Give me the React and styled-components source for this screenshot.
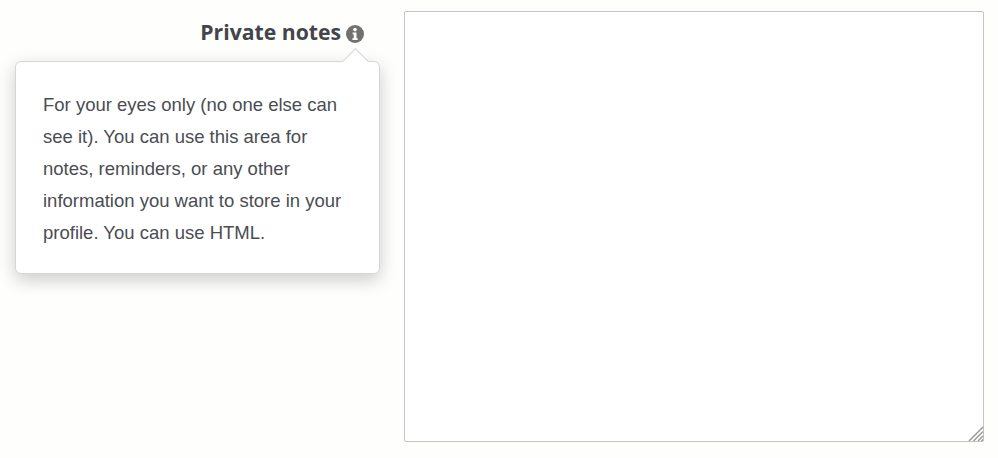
import React from 'react';
import styled, { createGlobalStyle } from 'styled-components';

const GlobalStyle = createGlobalStyle`
    html, body {
        margin: 0;
        padding: 0;
        background: #fefefd;
    }
`;

const StyledForm = styled.div`
    display: grid;
    grid-template-columns: 404px 580px;
    width: 998px;
    height: 458px;
    padding-top: 11px;
    box-sizing: border-box;
    overflow: hidden;
`;

const StyledLabelCol = styled.div`
    position: relative;
    display: flex;
    justify-content: flex-end;
    align-items: flex-start;
    padding: 7px 40px 0 0;
`;

const StyledLabel = styled.label`
    display: flex;
    align-items: center;
    gap: 5px;
    color: #43454b;
    font-family: 'Open Sans', sans-serif;
    font-size: 21.2px;
    font-weight: 700;
    line-height: 28px;
`;

const StyledInfo = styled.svg`
    width: 18px;
    height: 18px;
    margin-top: 4px;
`;

const StyledTooltip = styled.div`
    position: absolute;
    top: 50px;
    left: 15px;
    width: 365px;
    height: 213px;
    box-sizing: border-box;
    padding: 27px 20px 0 27px;
    background: #fff;
    border: 1px solid #d6d6d6;
    border-radius: 6px;
    box-shadow: 0 6px 18px rgba(0, 0, 0, 0.2);
    color: #4a4d52;
    font-family: 'Liberation Sans', Arial, sans-serif;
    font-size: 18.5px;
    line-height: 32px;

    &:before {
        content: '';
        position: absolute;
        top: -10px;
        right: 14px;
        width: 18px;
        height: 18px;
        background: #fff;
        border-top: 1px solid #d6d6d6;
        border-left: 1px solid #d6d6d6;
        transform: rotate(45deg);
    }
`;

const StyledTooltipText = styled.p`
    position: relative;
    margin: 0;
`;

const StyledFieldCol = styled.div`
    position: relative;
    height: 431px;
`;

const StyledTextarea = styled.textarea`
    display: block;
    width: 100%;
    height: 100%;
    box-sizing: border-box;
    background: #fff;
    border: 1px solid #c4c4c4;
    border-radius: 2px;
    outline: 0;
    resize: none;
`;

const StyledGrip = styled.svg`
    position: absolute;
    right: 0;
    bottom: 0;
    width: 16px;
    height: 16px;
`;

const App = () => (
    <>
        <GlobalStyle />
        <StyledForm>
            <StyledLabelCol>
                <StyledLabel htmlFor="notes">
                    Private notes
                    <StyledInfo viewBox="0 0 18 18" aria-hidden="true">
                        <circle cx="9" cy="9" r="9" fill="#717171" />
                        <circle cx="9" cy="4.6" r="1.8" fill="#fff" />
                        <path d="M6.6 7.4h3.9v5.8h1.2v1.9H6.4v-1.9h1.3V9.3H6.6z" fill="#fff" />
                    </StyledInfo>
                </StyledLabel>
                <StyledTooltip>
                    <StyledTooltipText>
                        For your eyes only (no one else can see it). You can use this area for notes,
                        reminders, or any other information you want to store in your profile. You can
                        use HTML.
                    </StyledTooltipText>
                </StyledTooltip>
            </StyledLabelCol>
            <StyledFieldCol>
                <StyledTextarea id="notes" />
                <StyledGrip viewBox="0 0 16 16" aria-hidden="true">
                    <path d="M1 15 15 1M5.5 15 15 5.5M10 15l5-5M13.5 15l1.5-1.5" stroke="#9a9a9a" strokeWidth="1.5" fill="none" />
                </StyledGrip>
            </StyledFieldCol>
        </StyledForm>
    </>
);

export default App;
